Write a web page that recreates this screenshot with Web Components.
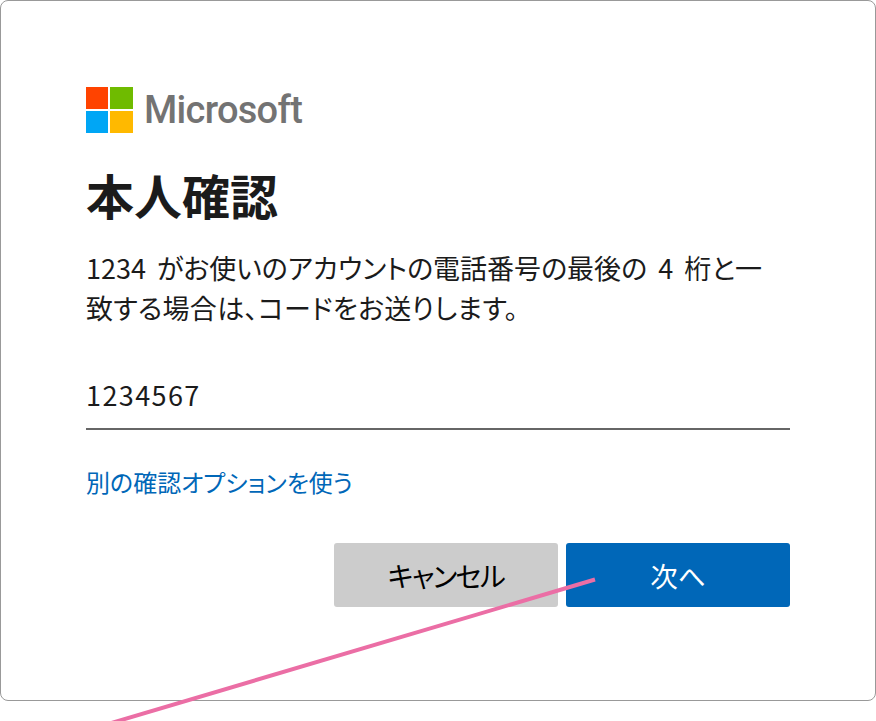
<!DOCTYPE html>
<html lang="ja">
<head>
<meta charset="utf-8">
<title>本人確認</title>
<style>
  html, body { margin: 0; padding: 0; background: #fff; }
  body { width: 876px; height: 721px; overflow: hidden; position: relative;
    font-family: "Noto Sans CJK JP", "Noto Sans", sans-serif; }
</style>
</head>
<body>
<signin-card>
  <ms-logo></ms-logo>
  <h-title>本人確認</h-title>
  <p-text>1234 がお使いのアカウントの電話番号の最後の 4 桁と一<br><span>致する場合は、コードをお送りします。</span></p-text>
  <code-input value="1234567"></code-input>
  <text-link>別の確認オプションを使う</text-link>
  <button-row>
    <ms-button>キャンセル</ms-button>
    <ms-button primary>次へ</ms-button>
  </button-row>
</signin-card>
<pink-line></pink-line>
<script>
class SigninCard extends HTMLElement {
  constructor() {
    super();
    this.attachShadow({ mode: "open" }).innerHTML = `
    <style>
      :host { display: block; box-sizing: border-box; width: 876px; height: 701px;
        border: 1px solid #999; border-radius: 8px; background: #fff;
        padding: 86px 85px 0 85px; }
    </style>
    <slot></slot>`;
  }
}
class MsLogo extends HTMLElement {
  constructor() {
    super();
    this.attachShadow({ mode: "open" }).innerHTML = `
    <style>
      :host { display: flex; align-items: center; gap: 11px; height: 46px; }
      svg { display: block; flex: none; }
      span { font: 500 38px/48px Roboto, sans-serif; color: #737373; letter-spacing: -0.7px; }
    </style>
    <svg width="47" height="46" viewBox="0 0 47 46">
      <rect x="0" y="0" width="22" height="22" fill="#ff4300"/>
      <rect x="24" y="0" width="23" height="22" fill="#6fbb00"/>
      <rect x="0" y="24" width="22" height="22" fill="#00a6f5"/>
      <rect x="24" y="24" width="23" height="22" fill="#ffb900"/>
    </svg>
    <span>Microsoft</span>`;
  }
}
class HTitle extends HTMLElement {
  constructor() {
    super();
    this.attachShadow({ mode: "open" }).innerHTML = `
    <style>
      :host { display: block; margin-top: 32px; font: 700 48px/58px "Noto Sans CJK JP", sans-serif; color: #1b1b1b; }
    </style>
    <slot></slot>`;
  }
}
class PText extends HTMLElement {
  constructor() {
    super();
    this.attachShadow({ mode: "open" }).innerHTML = `
    <style>
      :host { display: block; margin-top: 25px; font: 400 27px/40px "Noto Sans CJK JP", sans-serif; color: #1b1b1b; white-space: nowrap;
        font-feature-settings: "palt"; letter-spacing: 0; word-spacing: 5px; }
      ::slotted(span) { letter-spacing: 0.3px; }
    </style>
    <slot></slot>`;
  }
}
class CodeInput extends HTMLElement {
  constructor() {
    super();
    this.attachShadow({ mode: "open" }).innerHTML = `
    <style>
      :host { display: block; margin-top: 38px; width: 704px; }
      input { display: block; box-sizing: border-box; width: 100%; height: 64px; padding: 0 0 6px; border: 0;
        border-bottom: 2px solid #666; outline: 0; background: transparent; color: #1b1b1b;
        font: 400 27px/40px "Noto Sans CJK JP", sans-serif; letter-spacing: 1.4px; }
    </style>
    <input type="text">`;
    this.shadowRoot.querySelector("input").value = this.getAttribute("value");
  }
}
class TextLink extends HTMLElement {
  constructor() {
    super();
    this.attachShadow({ mode: "open" }).innerHTML = `
    <style>
      :host { display: block; margin-top: 32px; font: 400 24px/40px "Noto Sans CJK JP", sans-serif; font-feature-settings: "palt"; color: #0067b8; }
    </style>
    <slot></slot>`;
  }
}
class ButtonRow extends HTMLElement {
  constructor() {
    super();
    this.attachShadow({ mode: "open" }).innerHTML = `
    <style>
      :host { display: flex; justify-content: flex-end; gap: 8px; width: 704px; margin-top: 41px; }
    </style>
    <slot></slot>`;
  }
}
class MsButton extends HTMLElement {
  constructor() {
    super();
    this.attachShadow({ mode: "open" }).innerHTML = `
    <style>
      :host { display: flex; align-items: center; justify-content: center; width: 224px; height: 64px;
        border-radius: 3px; background: #ccc; color: #000;
        font: 400 27.5px/64px "Noto Sans CJK JP", sans-serif; font-feature-settings: "palt"; letter-spacing: -1.6px; }
      :host([primary]) { background: #0067b8; color: #fff; letter-spacing: 0; }
    </style>
    <slot></slot>`;
  }
}
class PinkLine extends HTMLElement {
  constructor() {
    super();
    this.attachShadow({ mode: "open" }).innerHTML = `
    <style>
      :host { display: block; position: absolute; left: 0; top: 0; width: 876px; height: 721px; pointer-events: none; }
      svg { display: block; }
    </style>
    <svg width="876" height="721" viewBox="0 0 876 721">
      <line x1="595" y1="579.5" x2="108" y2="724" stroke="#eb6ea5" stroke-width="4"/>
    </svg>`;
  }
}
customElements.define("signin-card", SigninCard);
customElements.define("ms-logo", MsLogo);
customElements.define("h-title", HTitle);
customElements.define("p-text", PText);
customElements.define("code-input", CodeInput);
customElements.define("text-link", TextLink);
customElements.define("button-row", ButtonRow);
customElements.define("ms-button", MsButton);
customElements.define("pink-line", PinkLine);
</script>
</body>
</html>
